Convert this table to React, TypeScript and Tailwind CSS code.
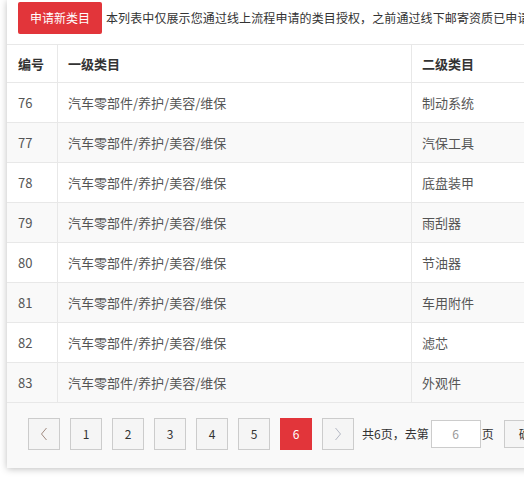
import React from "react";

const rows = [
  { id: 76, sub: "制动系统" },
  { id: 77, sub: "汽保工具" },
  { id: 78, sub: "底盘装甲" },
  { id: 79, sub: "雨刮器" },
  { id: 80, sub: "节油器" },
  { id: 81, sub: "车用附件" },
  { id: 82, sub: "滤芯" },
  { id: 83, sub: "外观件" },
];

const font = { fontFamily: '"Noto Sans CJK SC", "Liberation Sans", sans-serif' };

function PageBtn({ children, active }: { children: React.ReactNode; active?: boolean }) {
  return (
    <div
      className={
        "w-[32px] h-[32px] flex items-center justify-center text-[12px] border " +
        (active ? "bg-[#e2353a] border-[#e2353a] text-white" : "bg-[#f5f5f5] border-[#cccccc] text-[#333]")
      }
    >
      {children}
    </div>
  );
}

export default function App() {
  return (
    <div className="w-[524px] h-[479px] overflow-hidden bg-white" style={font}>
      <div className="ml-[7px] w-[640px] bg-white shadow-[0_1px_7px_rgba(0,0,0,0.26)]">
        {/* top bar */}
        <div className="h-[45px] border-b border-[#e8e8e8] flex items-start pt-[2px] pl-[11px]">
          <button className="h-[32px] px-[12px] bg-[#e2353a] text-white text-[12px] rounded-[2px] shrink-0">
            申请新类目
          </button>
          <span className="ml-[4px] mt-[7px] text-[12px] text-[#333] whitespace-nowrap tracking-[0.1px]">
            本列表中仅展示您通过线上流程申请的类目授权，之前通过线下邮寄资质已申请的类目不在此列表中
          </span>
        </div>

        {/* header */}
        <div className="flex h-[38px] border-b border-[#e8e8e8] text-[13px] font-bold text-[#333]">
          <div className="w-[51px] border-r border-[#e8e8e8] pl-[11px] flex items-center">编号</div>
          <div className="w-[354px] border-r border-[#e8e8e8] pl-[10px] flex items-center">一级类目</div>
          <div className="flex-1 pl-[10px] flex items-center">二级类目</div>
        </div>

        {rows.map((r, i) => (
          <div
            key={r.id}
            className={
              "flex h-[40px] border-b border-[#e8e8e8] text-[13px] text-[#555] " +
              (i % 2 === 1 ? "bg-[#f9f9f9]" : "bg-white")
            }
          >
            <div className="w-[51px] border-r border-[#e8e8e8] pl-[11px] flex items-center">{r.id}</div>
            <div className="w-[354px] border-r border-[#e8e8e8] pl-[10px] flex items-center">
              汽车零部件/养护/美容/维保
            </div>
            <div className="flex-1 pl-[10px] flex items-center">{r.sub}</div>
          </div>
        ))}

        {/* pagination */}
        <div className="h-[65px] bg-[#f9f9f9] pt-[15px] pl-[21px] flex items-start">
          <div className="flex items-center gap-[10px]">
            <PageBtn>
              <svg width="8" height="14" viewBox="0 0 8 14" fill="none">
                <path d="M6.5 1 L1.5 7 L6.5 13" stroke="#a08a80" strokeWidth="1" />
              </svg>
            </PageBtn>
            <PageBtn>1</PageBtn>
            <PageBtn>2</PageBtn>
            <PageBtn>3</PageBtn>
            <PageBtn>4</PageBtn>
            <PageBtn>5</PageBtn>
            <PageBtn active>6</PageBtn>
            <PageBtn>
              <svg width="8" height="14" viewBox="0 0 8 14" fill="none">
                <path d="M1.5 1 L6.5 7 L1.5 13" stroke="#b4b8c4" strokeWidth="1" />
              </svg>
            </PageBtn>
          </div>
          <div className="flex items-center h-[32px] ml-[8px] text-[12px] text-[#333]">
            <span>共6页，去第</span>
            <div className="ml-[2px] w-[50px] h-[28px] border border-[#cccccc] bg-white flex items-center justify-center text-[#999]">
              6
            </div>
            <span className="ml-[1px]">页</span>
            <div className="ml-[10px] h-[28px] px-[14px] border border-[#cccccc] bg-[#f5f5f5] flex items-center">
              确定
            </div>
          </div>
        </div>
      </div>
    </div>
  );
}
